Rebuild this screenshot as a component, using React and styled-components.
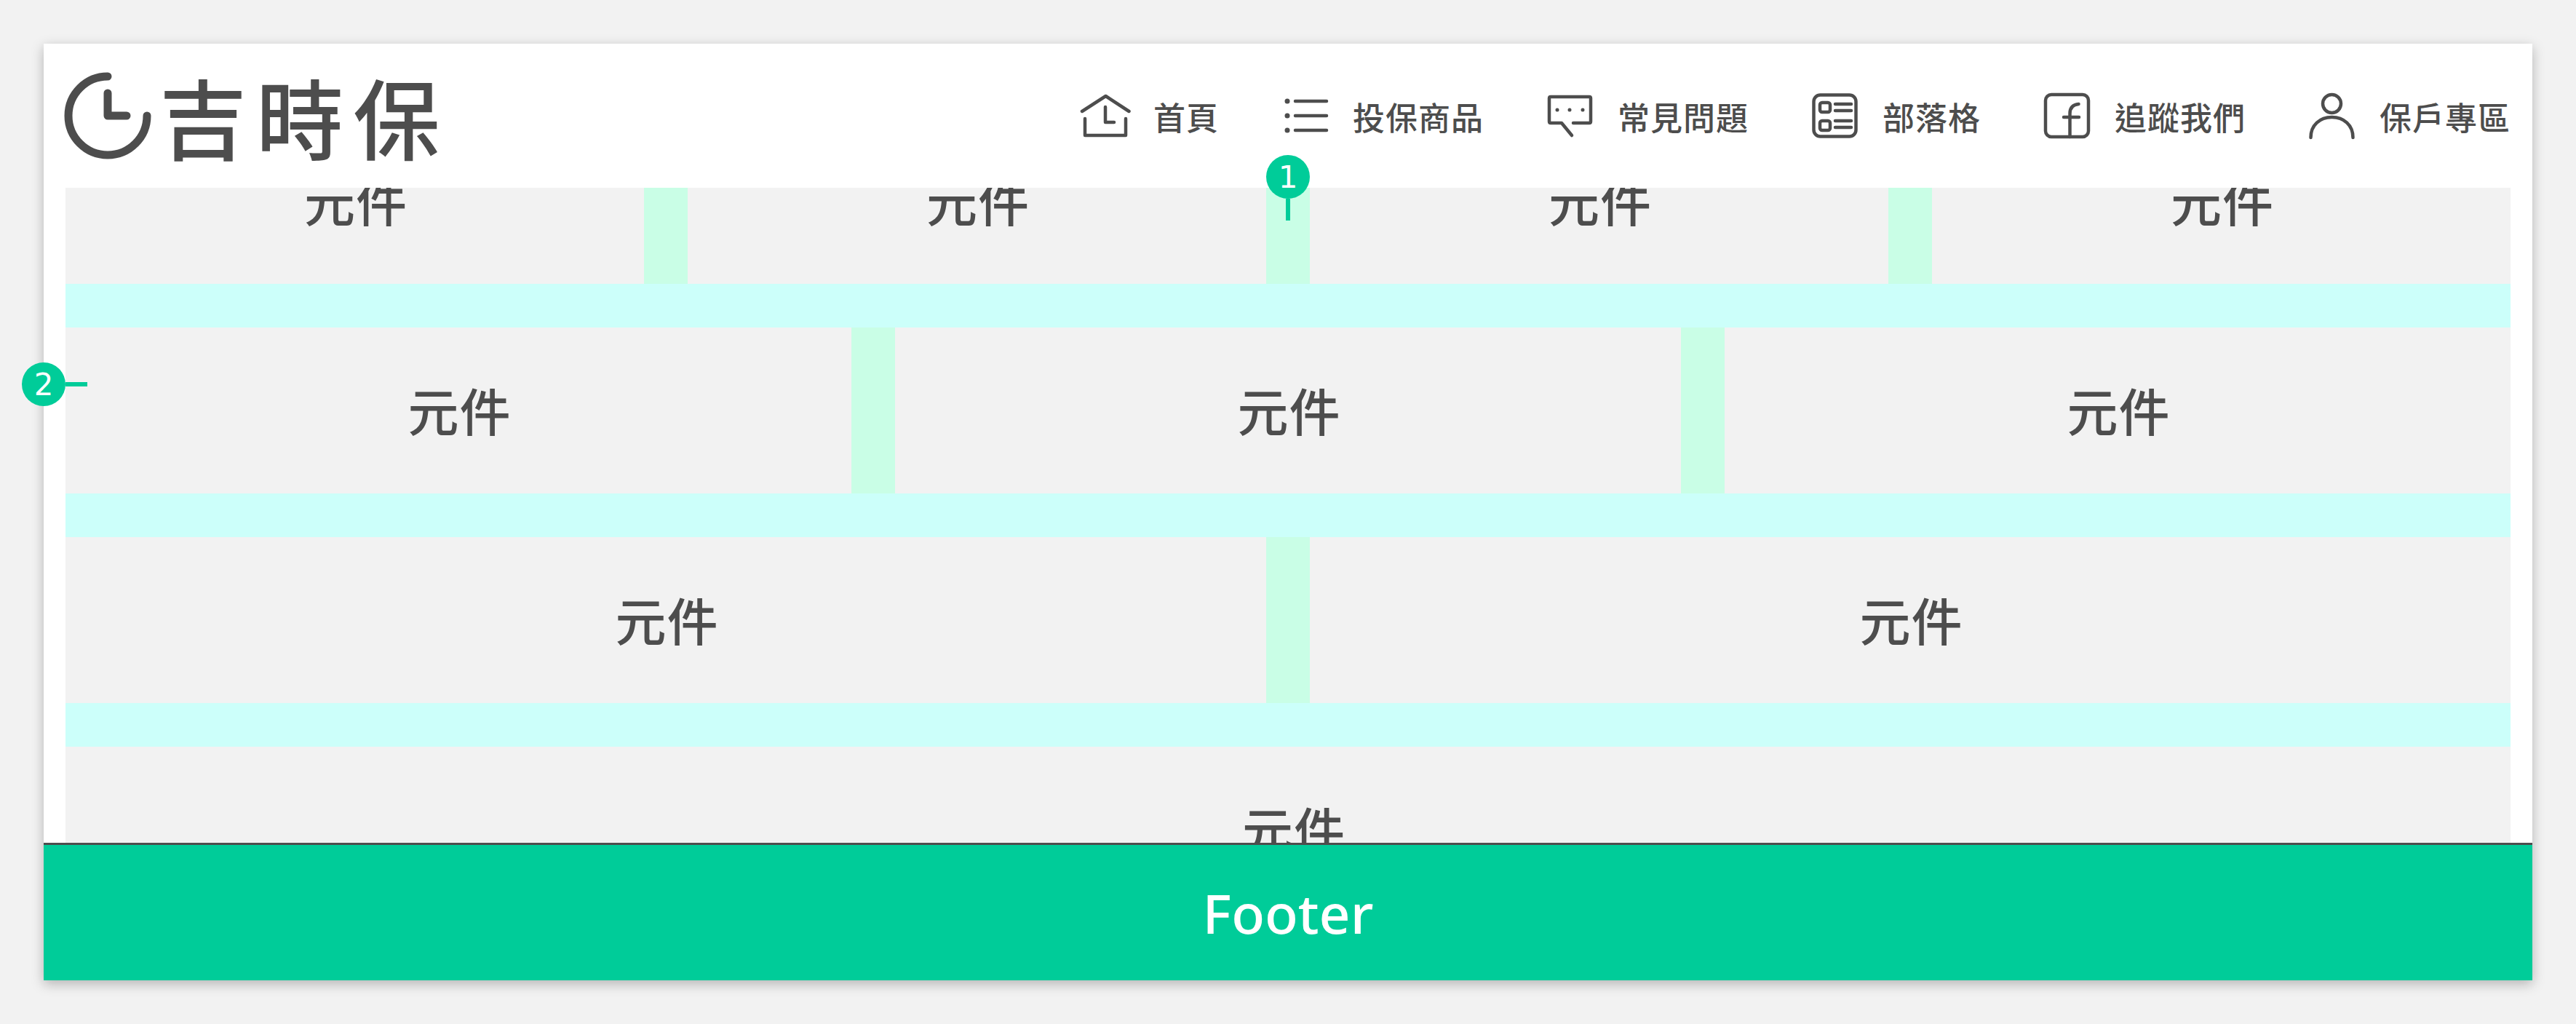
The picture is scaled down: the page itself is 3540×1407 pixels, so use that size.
import React from 'react';
import styled, { createGlobalStyle } from 'styled-components';

const GlobalStyle = createGlobalStyle`
  html, body {
    margin: 0;
    padding: 0;
    background: #f2f2f2;
  }
`

const Page = styled.div`
  box-sizing: border-box;
  width: 3540px;
  height: 1407px;
  padding: 60px;
  font-family: "Noto Sans CJK TC", "Noto Sans", sans-serif;
  color: #4d4d4d;
`

const Card = styled.div`
  position: relative;
  display: flex;
  flex-direction: column;
  height: 1287px;
  background: #fff;
  box-shadow: 0 5px 16px rgba(0, 0, 0, 0.26);
`

const Header = styled.header`
  flex: 0 0 198px;
  display: flex;
  align-items: flex-start;
  justify-content: space-between;
  padding: 0 30px 0 28px;
`

const Logo = styled.div`
  display: flex;
  align-items: center;
  gap: 11px;
  padding-top: 39px;
`

const LogoMark = styled.svg`
  display: block;
  width: 120px;
  height: 120px;
  fill: none;
  stroke: #4d4d4d;
  stroke-width: 11;
  stroke-linecap: round;
  stroke-linejoin: round;
`

const LogoText = styled.div`
  font-size: 120px;
  line-height: 116px;
  font-weight: 500;
  letter-spacing: 13px;
  white-space: nowrap;
`

const Nav = styled.nav`
  display: flex;
  align-items: center;
  gap: 87px;
  padding-top: 68px;
`

const NavItem = styled.a`
  display: flex;
  align-items: center;
  gap: 34px;
`

const NavIcon = styled.svg`
  display: block;
  width: 63px;
  height: 62px;
  overflow: visible;
  fill: none;
  stroke: #4d4d4d;
  stroke-width: 4.5;
  stroke-linecap: round;
  stroke-linejoin: round;
`

const NavLabel = styled.span`
  font-size: 44px;
  letter-spacing: 1px;
  font-weight: 500;
  line-height: 62px;
  position: relative;
  top: 1px;
  white-space: nowrap;
`

const Main = styled.main`
  flex: 1;
  overflow: hidden;
  padding: 0 30px;
`

const Grid = styled.div`
  display: flex;
  flex-direction: column;
  gap: 60px;
  margin-top: -96px;
  background: #ccfffa;
`

const Row = styled.div`
  display: grid;
  grid-template-columns: repeat(${props => props.$cols}, 1fr);
  gap: 60px;
  height: 228px;
  background: #c9fee6;
`

const Cell = styled.div`
  display: flex;
  align-items: center;
  justify-content: center;
  background: #f2f2f2;
  font-size: 70px;
  font-weight: 500;
  letter-spacing: 1px;
  padding-left: ${props => props.$shift}px;
  padding-bottom: 4px;
`

const Footer = styled.footer`
  flex: 0 0 186px;
  display: flex;
  align-items: center;
  justify-content: center;
  border-top: 3px solid #4d4d4d;
  background: #00cc99;
  color: #fff;
  font-size: 75px;
  font-weight: 500;
  font-family: "Noto Sans", "Open Sans", sans-serif;
`

const Badge = styled.div`
  position: absolute;
  z-index: 2;
  left: ${props => props.$left}px;
  top: ${props => props.$top}px;
  width: 60px;
  height: 60px;
  border-radius: 50%;
  display: flex;
  align-items: center;
  justify-content: center;
  background: #00cc99;
  color: #fff;
  font-size: 42px;
  font-family: "DejaVu Sans", sans-serif;

  &::after {
    content: "";
    position: absolute;
    background: #00cc99;
    ${props => props.$side === 'right'
      ? 'left: 60px; top: 27px; width: 30px; height: 6px;'
      : 'left: 27px; top: 60px; width: 6px; height: 30px;'}
  }
`

const rows = [4, 3, 2, 1]

const HomeIcon = () => (
  <NavIcon viewBox="0 0 63 62">
    <path d="M-1 25L31.5 4L63.5 25" />
    <path d="M3 35V58H59V35" />
    <path d="M31 19V40H43" />
  </NavIcon>
)

const ListIcon = () => (
  <NavIcon viewBox="0 0 63 62">
    <path d="M18 11H61M18 31H61M18 51H61" />
    <path d="M7 11h.01M7 31h.01M7 51h.01" strokeWidth="7" />
  </NavIcon>
)

const ChatIcon = () => (
  <NavIcon viewBox="0 0 63 62">
    <path d="M36 41H58Q60 41 60 39V7Q60 5 58 5H5Q3 5 3 7V39Q3 41 5 41H20L34 58" />
    <path d="M14 23h.01M31 23h.01M49 23h.01" strokeWidth="5" />
  </NavIcon>
)

const BlogIcon = () => (
  <NavIcon viewBox="0 0 63 62">
    <rect x="2.5" y="2.5" width="58" height="57" rx="9" />
    <rect x="11" y="13" width="14" height="13" rx="3" />
    <rect x="11" y="38" width="14" height="13" rx="3" />
    <path d="M32 15H54M32 24H54M32 38H54M32 47H54" />
  </NavIcon>
)

const FacebookIcon = () => (
  <NavIcon viewBox="0 0 63 62">
    <rect x="2" y="2" width="59" height="58" rx="8" />
    <path d="M35.5 60V28Q35.5 16 47.5 15" />
    <path d="M27 33H48" />
  </NavIcon>
)

const UserIcon = () => (
  <NavIcon viewBox="0 0 63 62">
    <circle cx="31.5" cy="14.5" r="12.5" />
    <path d="M2.5 61C2.5 44 15 33 31.5 33C48 33 60.5 44 60.5 61" />
  </NavIcon>
)

const navItems = [
  { label: '首頁', icon: <HomeIcon /> },
  { label: '投保商品', icon: <ListIcon /> },
  { label: '常見問題', icon: <ChatIcon /> },
  { label: '部落格', icon: <BlogIcon /> },
  { label: '追蹤我們', icon: <FacebookIcon /> },
  { label: '保戶專區', icon: <UserIcon /> },
]

export default function App() {
  return (
    <Page>
      <GlobalStyle />
      <Card>
        <Header>
          <Logo>
            <LogoMark viewBox="0 0 120 120">
              <path d="M60 6A54 54 0 1 0 114 60" />
              <path d="M60 29V60H86" />
            </LogoMark>
            <LogoText>吉時保</LogoText>
          </Logo>
          <Nav>
            {navItems.map(item => (
              <NavItem key={item.label}>
                {item.icon}
                <NavLabel>{item.label}</NavLabel>
              </NavItem>
            ))}
          </Nav>
        </Header>
        <Main>
          <Grid>
            {rows.map(cols => (
              <Row key={cols} $cols={cols}>
                {Array.from({ length: cols }).map((_, i) => (
                  <Cell key={i} $shift={cols === 1 ? 16 : 3}>元件</Cell>
                ))}
              </Row>
            ))}
          </Grid>
        </Main>
        <Footer>Footer</Footer>
        <Badge $left={1680} $top={153}>1</Badge>
        <Badge $left={-30} $top={438} $side="right">2</Badge>
      </Card>
    </Page>
  );
}
